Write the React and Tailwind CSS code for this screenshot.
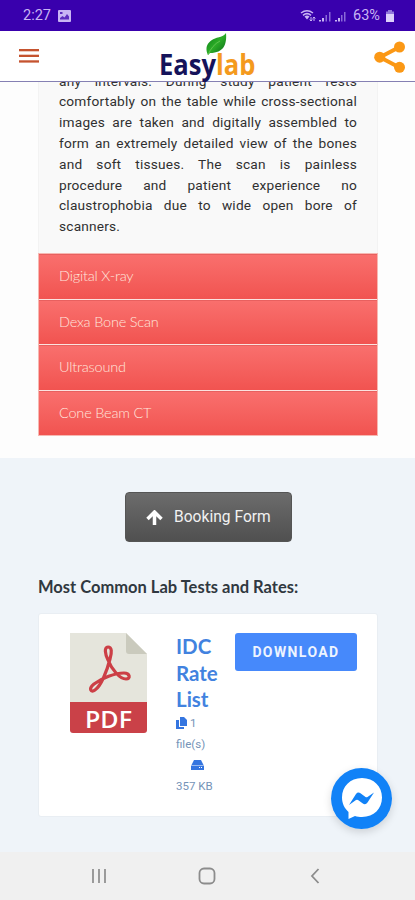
import React from "react";

const paragraph = [
  "any intervals. During study patient rests",
  "comfortably on the table while cross-sectional",
  "images are taken and digitally assembled to",
  "form an extremely detailed view of the bones",
  "and soft tissues. The scan is painless",
  "procedure and patient experience no",
  "claustrophobia due to wide open bore of",
];

const services = ["Digital X-ray", "Dexa Bone Scan", "Ultrasound", "Cone Beam CT"];

function StatusBar() {
  return (
    <div className="flex h-[31px] shrink-0 items-center bg-[#3900ad] pl-[23px] pr-[20px] pt-px font-medium text-[#c9b5f4]">
      <span className="w-[35px] text-[14.5px] font-normal">2:27</span>
      <svg width="13" height="12" viewBox="0 0 13 12" className="-mt-px">
        <rect width="13" height="12" rx="1" fill="#c9b5f4" />
        <path d="M2 9.5V8l2.5-2 2 1.5L9 4l2 2.500v3z" fill="#3900ad" opacity=".75" />
        <rect x="2" y="2" width="2.500" height="2" fill="#3900ad" opacity=".75" />
      </svg>
      <svg width="48" height="14" viewBox="0 0 48 14" className="ml-auto">
        <g fill="none" stroke="#c9b5f4" strokeWidth="1.500">
          <path d="M1 4Q7 -.5 13 4M3 6.300Q7 3 11 6.300" />
        </g>
        <path d="M4.500 7.500Q7 5.500 9.500 7.500L7 10.500z" fill="#c9b5f4" />
        <path d="M11 8v4M14 8v4M9.700 10.500 11 12l1.300-1.500M12.700 9.500 14 8l1.300 1.500" stroke="#c9b5f4" fill="none" />
        <path d="M19 12.500V11h2v1.500zM22 12.500V9h2v3.500zM35 12.500V11h2v1.500zM38 12.500V9h2v3.500z" fill="#c9b5f4" />
        <path d="M25.500 12.500V6h1.500v6.500zM29 12.500V3h1.500v9.500zM41 12.500V6h1.500v6.500zM44 12.500V3h1.500v9.500z" fill="#8a68d8" />
      </svg>
      <span className="ml-[5px] w-[32px] text-[14.5px] font-normal">63%</span>
      <svg width="10" height="12" viewBox="0 0 10 12">
        <path d="M3 0h4v1.500h2V5H1V1.500h2z" fill="#9277dc" />
        <path d="M1 4h8v8H1z" fill="#ddd0fb" />
      </svg>
    </div>
  );
}

function Header() {
  return (
    <header className="relative z-10 flex h-[51px] shrink-0 items-center border-b border-[#8580b3] bg-white pl-[19px] pr-[9px]">
      <svg width="20" height="16" viewBox="0 0 20 16">
        <g fill="#c5532f">
          <rect y="1" width="20" height="2.300" />
          <rect y="6.700" width="20" height="2.300" />
          <rect y="12.300" width="20" height="2.300" />
        </g>
      </svg>
      <svg width="100" height="51" viewBox="0 0 100 51" className="ml-[120px] overflow-visible">
        <defs>
          <linearGradient id="leaf" x1="0" y1="0" x2="1" y2="1">
            <stop offset="0" stopColor="#087a17" />
            <stop offset=".5" stopColor="#2cad27" />
            <stop offset="1" stopColor="#08651a" />
          </linearGradient>
        </defs>
        <text x="0" y="43.500" fontFamily="Open Sans, sans-serif" fontSize="28.500" fontWeight="700" fill="#15135a" textLength="57" lengthAdjust="spacingAndGlyphs">Easy</text>
        <text x="57" y="43.500" fontFamily="Open Sans, sans-serif" fontSize="28.500" fontWeight="700" fill="#f49a1d" textLength="39.500" lengthAdjust="spacingAndGlyphs">lab</text>
        <path d="M49 24C44 13 53 8 59 6.500Q65 5 67 2C68 13 65 22 51 22Z" fill="url(#leaf)" />
        <path d="M49 24Q53 14 61 10" fill="none" stroke="#6cc659" strokeWidth=".8" />
      </svg>
      <svg width="32" height="32" viewBox="0 0 32 32" className="ml-auto mt-px">
        <path d="M25.500 6 6 16.200 25.500 26.500" fill="none" stroke="#fb9815" strokeWidth="4" />
        <g fill="#fb9815">
          <circle cx="25.500" cy="6" r="5.500" />
          <circle cx="5.700" cy="16.200" r="5.500" />
          <circle cx="25.500" cy="26.300" r="5.500" />
        </g>
      </svg>
    </header>
  );
}

function PdfIcon() {
  return (
    <svg width="77" height="100" viewBox="0 0 77 100" className="shrink-0">
      <path d="M0 0h56l21 21v49H0z" fill="#e5e5dc" />
      <path d="M56 0v18q0 3 3 3h18z" fill="#cacabd" />
      <path d="M0 69h77v28q0 3-3 3H3q-3 0-3-3z" fill="#ca4148" />
      <path
        d="M38 14C34 14 35 21 38 27C42 37 50 46 56 46C61 46 60 40 54 40C45 40 32 45 24 51C18 56 21 60 25 57C31 53 37 38 40 26C42 19 42 14 38 14Z"
        fill="none"
        stroke="#cc3f46"
        strokeWidth="3.200"
        strokeLinejoin="round"
      />
      <text x="15" y="94.500" fontFamily="Open Sans, sans-serif" fontWeight="600" fontSize="24" fill="#fff" textLength="47" lengthAdjust="spacingAndGlyphs">PDF</text>
    </svg>
  );
}

function DownloadCard() {
  return (
    <div className="ml-[38px] mr-[37px] mt-[16px] flex h-[204px] items-start rounded-[3px] border border-[#e9eef3] bg-white pl-[31px] pt-[19px]">
      <PdfIcon />
      <div className="ml-[29px] w-[59px] shrink-0">
        <h3 className="w-[45px] font-[Lato,sans-serif] text-[20.500px] font-bold leading-[26.500px] text-[#4282df]">
          IDC Rate List
        </h3>
        <div className="text-[11.500px] leading-[21px] text-[#7594b8]">
          <div className="flex items-center gap-[3px]">
            <svg width="11" height="12" viewBox="0 0 11 12" fill="#3475e0">
              <path d="M4 0h4l3 3v6H4z" />
              <path d="M0 3h3v7h5v2H0z" />
            </svg>
            1
          </div>
          <div>file(s)</div>
          <div className="flex h-[21px] items-center pl-[15px]">
            <svg width="13" height="10" viewBox="0 0 13 10" fill="#3475e0">
              <path d="M3 0h7l2.500 5H.5z" />
              <path d="M0 5.500h13V10H0z" />
              <path d="M8 7.500h1M10 7.500h1" stroke="white" />
            </svg>
          </div>
          <div className="whitespace-nowrap">357 KB</div>
        </div>
      </div>
      <button className="flex h-[38px] w-[122px] shrink-0 items-center justify-center rounded-[3px] bg-[#4689fb] text-[14px] font-bold tracking-[1.400px] text-[#edf4ff]">
        DOWNLOAD
      </button>
    </div>
  );
}

function NavigationBar() {
  return (
    <nav className="flex h-[48px] shrink-0 items-center bg-[#f0f0f0] pl-[91px] text-[#8c8c8c]">
      <svg width="16" height="16" viewBox="0 0 16 16" fill="none" stroke="currentColor" strokeWidth="1.700">
        <path d="M2 1v14M8 1v14M14 1v14" />
      </svg>
      <svg width="18" height="18" viewBox="0 0 18 18" fill="none" stroke="currentColor" strokeWidth="1.800" className="ml-[91px]">
        <rect x="1.500" y="1.500" width="15" height="15" rx="4.500" />
      </svg>
      <svg width="10" height="16" viewBox="0 0 10 16" fill="none" stroke="currentColor" strokeWidth="1.800" className="ml-[94px]">
        <path d="M8.500 1 2 8l6.500 7" />
      </svg>
    </nav>
  );
}

export default function App() {
  return (
    <div className="relative flex h-[900px] w-[415px] flex-col overflow-hidden bg-[#fdfdfd] font-[Roboto,sans-serif]">
      <StatusBar />
      <Header />
      <section className="h-[376px] shrink-0 pl-[38px] pr-[37px]">
        <div className="flex h-[171px] flex-col justify-end overflow-hidden border-x border-[#f3f3f3] bg-[#f9f9f9] pb-[16px] pl-[20px] pr-[20px]">
          <div className="text-[13.700px] leading-[20.800px] tracking-[0.200px] text-[#303030]">
            {paragraph.map((line) => (
              <p key={line} className="whitespace-nowrap [text-align-last:justify]">{line}</p>
            ))}
            <p>scanners.</p>
          </div>
        </div>
        <ul className="flex flex-col gap-px border border-[#f6b8b2] bg-[#fbe3df]">
          {services.map((service) => (
            <li
              key={service}
              className="flex h-[44.500px] items-center border-t border-[#e8605f] bg-linear-to-b from-[#f96f6d] to-[#f15350] pb-px pl-[20px] font-[Lato,sans-serif] text-[14.500px] font-light tracking-[-0.200px] text-[#ffe6dd]"
            >
              {service}
            </li>
          ))}
        </ul>
      </section>
      <main className="h-[394px] shrink-0 bg-[#eff4f9] pt-[34px]">
        <button className="ml-[125px] flex h-[50px] w-[167px] items-center rounded-[4px] border border-[#555] bg-linear-to-b from-[#6c6c6c] to-[#505050] pl-[20px] pt-px text-[15.600px] text-[#f1f1f1]">
          <svg width="17" height="16" viewBox="0 0 17 16" className="mr-[11px]">
            <path d="M1.500 9 8.500 2l7 7M8.500 3v12" fill="none" stroke="white" strokeWidth="3.500" />
          </svg>
          Booking Form
        </button>
        <h2 className="ml-[38px] mt-[35px] whitespace-nowrap font-[Lato,sans-serif] text-[16.500px] font-bold leading-[20px] text-[#303840]">
          Most Common Lab Tests and Rates:
        </h2>
        <DownloadCard />
      </main>
      <NavigationBar />
      <button aria-label="Messenger" className="absolute left-[331px] top-[768px] z-20 h-[61px] w-[61px] rounded-full shadow-[0_3px_8px_rgba(0,0,0,0.15)]">
        <svg width="61" height="61" viewBox="0 0 61 61">
          <circle cx="30.500" cy="30.500" r="30.500" fill="#1182f7" />
          <path d="M31 10C19 10 11 18.500 11 29.500c0 6 2.600 11 6.500 14.500v7l6.500-3.100c2 .7 4.500 1.100 7 1.100 12 0 20-8.500 20-19.500S43 10 31 10z" fill="#fff" />
          <path d="m18 37 7-11q2-2.500 4.500-.7l5 3.700q1 .7 2 0l6.500-4.500-6.500 10q-2 3-5 .8l-4.500-3.300q-1-.7-2 0z" fill="#1182f7" />
        </svg>
      </button>
    </div>
  );
}
